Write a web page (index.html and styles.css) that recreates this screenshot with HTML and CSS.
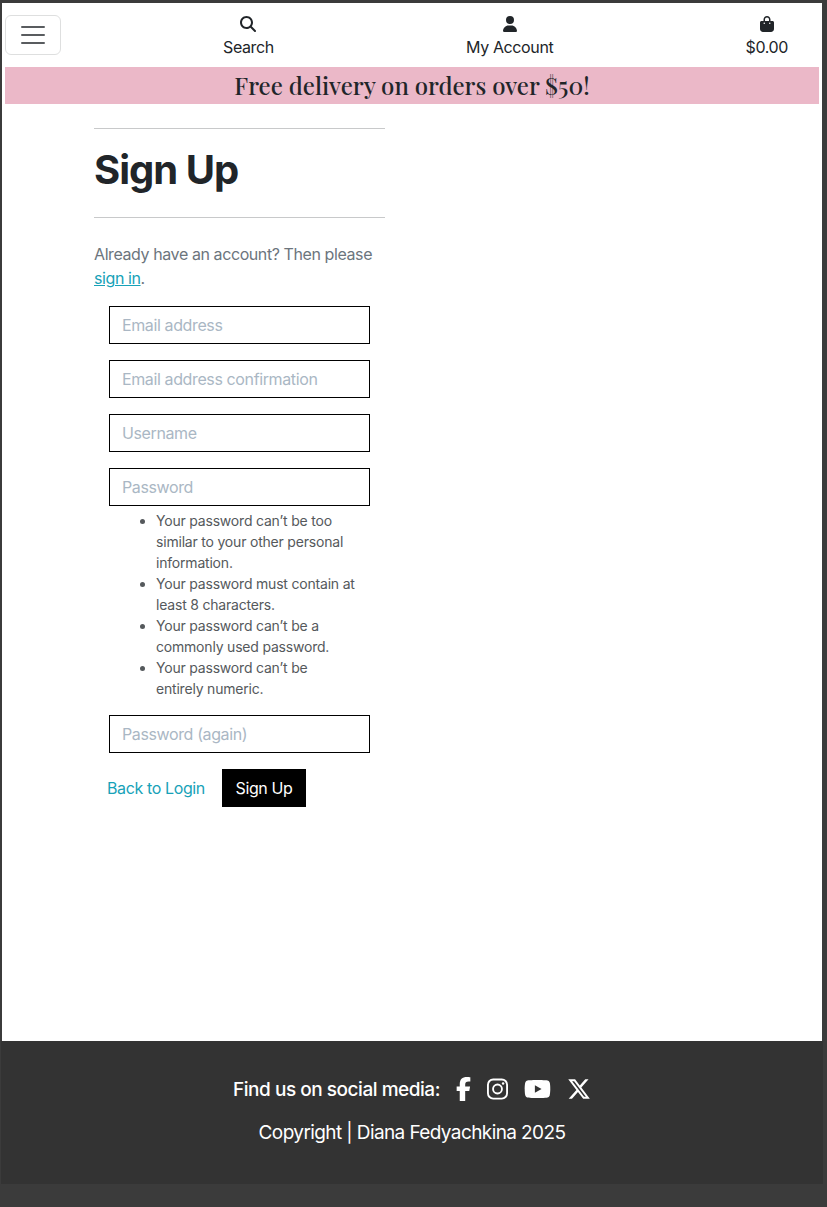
FILE: index.html
```html
<!DOCTYPE html>
<html lang="en">
<head>
<meta charset="utf-8">
<title>Sign Up</title>
<link rel="stylesheet" href="styles.css">
</head>
<body>
<div class="page">
  <header class="topbar">
    <button class="toggler" aria-label="Menu">
      <svg width="30" height="30" viewBox="0 0 30 30"><path d="M4 7h22M4 15h22M4 23h22" stroke="#595c5f" stroke-width="2" stroke-linecap="round"/></svg>
    </button>
    <nav class="nav">
      <a class="nav-item"><svg class="nav-icon" viewBox="0 0 512 512"><path d="M416 208c0 45.9-14.9 88.3-40 122.7L502.6 457.4c12.5 12.5 12.5 32.8 0 45.3s-32.8 12.5-45.3 0L330.7 376c-34.4 25.2-76.8 40-122.7 40C93.1 416 0 322.9 0 208S93.1 0 208 0S416 93.1 416 208zM208 352a144 144 0 1 0 0-288 144 144 0 1 0 0 288z"/></svg><span>Search</span></a>
      <a class="nav-item"><svg class="nav-icon" viewBox="0 0 448 512"><path d="M224 256A128 128 0 1 0 224 0a128 128 0 1 0 0 256zm-45.7 48C79.8 304 0 383.8 0 482.3C0 498.7 13.3 512 29.7 512H418.3c16.4 0 29.7-13.3 29.7-29.7C448 383.8 368.2 304 269.7 304H178.3z"/></svg><span>My Account</span></a>
      <a class="nav-item"><svg class="nav-icon" viewBox="0 0 448 512"><path d="M160 112c0-35.3 28.7-64 64-64s64 28.7 64 64v48H160V112zm-48 48H48c-26.5 0-48 21.5-48 48V416c0 53 43 96 96 96H352c53 0 96-43 96-96V208c0-26.5-21.5-48-48-48H336V112C336 50.1 285.9 0 224 0S112 50.1 112 112v48zm24 48a24 24 0 1 1 0 48 24 24 0 1 1 0-48zm152 24a24 24 0 1 1 48 0 24 24 0 1 1 -48 0z"/></svg><span>$0.00</span></a>
    </nav>
  </header>
  <div class="banner"><h4 class="banner-text">Free delivery on orders over $50!</h4></div>
  <main class="signup">
    <hr class="rule">
    <h1 class="title">Sign Up</h1>
    <hr class="rule">
    <p class="intro">Already have an account? Then please<br><a class="link">sign in</a>.</p>
    <form class="form">
      <input class="field" type="email" placeholder="Email address">
      <input class="field" type="email" placeholder="Email address confirmation">
      <input class="field" type="text" placeholder="Username">
      <input class="field" type="password" placeholder="Password">
      <ul class="hints">
        <li>Your password can’t be too<br>similar to your other personal<br>information.</li>
        <li>Your password must contain at<br>least 8 characters.</li>
        <li>Your password can’t be a<br>commonly used password.</li>
        <li>Your password can’t be<br>entirely numeric.</li>
      </ul>
      <input class="field" type="password" placeholder="Password (again)">
      <div class="actions"><a class="back">Back to Login</a><button class="submit" type="button">Sign Up</button></div>
    </form>
  </main>
</div>
<footer class="footer">
  <div class="social">
    <span class="social-label">Find us on social media:</span>
    <svg width="15" height="24" viewBox="0 0 320 512"><path d="M80 299.3V512H196V299.3h86.5l18-97.8H196V166.9c0-51.7 20.3-71.5 72.7-71.5c16.3 0 29.4 .4 37 1.2V7.9C291.4 4 256.4 0 236.2 0C129.3 0 80 50.5 80 159.4v42.1H14v97.8H80z"/></svg>
    <svg width="21" height="24" viewBox="0 0 448 512"><g fill="none" stroke="#fff" stroke-width="40"><rect x="20" y="52" width="408" height="408" rx="112"/><circle cx="224" cy="256" r="95"/></g><circle cx="343.5" cy="136.5" r="26.8"/></svg>
    <svg width="27" height="24" viewBox="0 0 576 512"><path d="M549.655 124.083c-6.281-23.65-24.787-42.276-48.284-48.597C458.781 64 288 64 288 64S117.22 64 74.629 75.486c-23.497 6.322-42.003 24.947-48.284 48.597-11.412 42.867-11.412 132.305-11.412 132.305s0 89.438 11.412 132.305c6.281 23.65 24.787 41.5 48.284 47.821C117.22 448 288 448 288 448s170.78 0 213.371-11.486c23.497-6.321 42.003-24.171 48.284-47.821 11.412-42.867 11.412-132.305 11.412-132.305s0-89.438-11.412-132.305zm-317.51 213.508V175.185l142.739 81.205-142.739 81.201z"/></svg>
    <svg width="24" height="24" viewBox="0 0 512 512"><path d="M389.2 48h70.6L305.6 224.2 487 464H345L233.7 318.6 106.5 464H35.8L200.7 275.5 26.8 48H172.4L272.9 180.9 389.2 48zM364.4 421.8h39.1L151.1 88h-42L364.4 421.8z"/></svg>
  </div>
  <p class="copyright">Copyright | Diana Fedyachkina 2025</p>
</footer>
</body>
</html>
```
FILE: styles.css
```css
* { box-sizing: border-box; }
body {
  margin: 0;
  height: 1207px;
  padding: 3px 4px 0 1px;
  background: #3b3b3b;
  color: #212529;
  font: 16px/24px Inter, "Liberation Sans", sans-serif;
  letter-spacing: -0.38px;
  overflow: hidden;
}
.page { height: 1038px; margin: 0 1px; padding: 0 3px; background: #fff; }
.topbar { display: flex; height: 64px; padding-top: 12px; }
.toggler {
  width: 56px; height: 40px; padding: 4px 12px;
  border: 1px solid #dedfdf; border-radius: 6px; background: #fff;
}
.toggler svg { display: block; }
.nav { flex: 1; display: flex; justify-content: space-between; padding: 0 31px 0 162px; }
.nav-item { display: flex; flex-direction: column; align-items: center; }
.nav-icon { height: 16px; margin: 1px 0 3px; fill: #212529; }
.banner { height: 37px; background: #ebb8c8; text-align: center; }
.banner-text {
  margin: 0;
  font: 500 24px/37px "Playfair Display", "Liberation Serif", serif;
  letter-spacing: 0;
}
.signup { width: 291px; margin-left: 89px; padding-top: 24px; }
.rule { margin: 0; border: 0; border-top: 1px solid #c8c9ca; }
.title { margin: 17px 0 23px; font-size: 40px; line-height: 48px; font-weight: 700; letter-spacing: -1px; }
.intro { margin: 24px 0 16px; color: #6c757d; white-space: nowrap; letter-spacing: -0.41px; }
.link { color: #17a2b8; text-decoration: underline; }
.form { padding: 0 15px; }
.field {
  display: block; width: 261px; height: 38px; margin: 0 0 16px; padding: 6px 12px;
  border: 1px solid #000; border-radius: 0; background: #fff;
  font: inherit; letter-spacing: inherit;
}
.field::placeholder { color: #aab7c4; opacity: 1; }
.hints {
  margin: -12px 0 16px; padding-left: 47px;
  color: #55595c; font-size: 14px; line-height: 21px; letter-spacing: -0.2px; white-space: nowrap;
}
.actions { display: flex; align-items: center; gap: 17px; margin-left: -2px; white-space: nowrap; }
.back { width: 98px; color: #17a2b8; }
.submit { width: 84px; height: 38px; padding: 0; border: 0; background: #000; color: #fff; font: inherit; letter-spacing: inherit; }
.footer { height: 143px; padding-top: 36px; background: #333; color: #fff; text-align: center; font-size: 19px; }
.social { display: flex; justify-content: center; align-items: center; gap: 16px; height: 24px; }
.social svg { flex: none; fill: #fff; }
.social-label { padding-top: 2px; font-weight: 500; letter-spacing: -0.47px; white-space: nowrap; }
.copyright { margin: 20px 0 0; letter-spacing: -0.6px; }
```
